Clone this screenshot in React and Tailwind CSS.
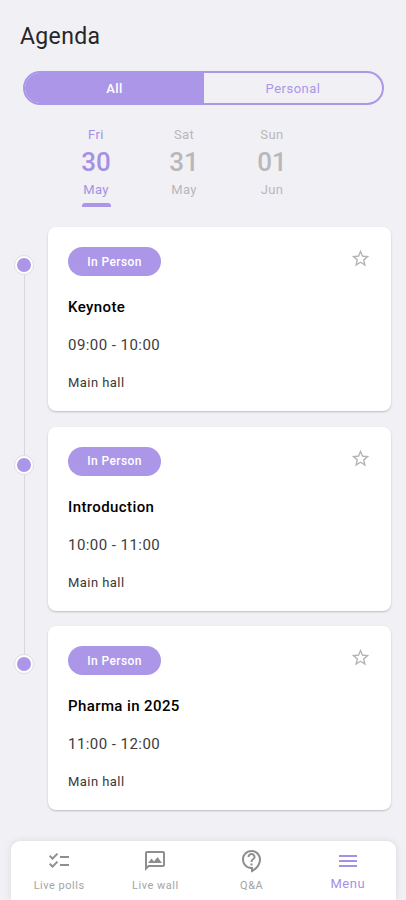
import {
  MdChecklist,
  MdMenu,
  MdOutlineContactSupport,
  MdOutlineMms,
  MdStarBorder,
} from "react-icons/md";

const days = [
  { day: "Fri", date: "30", month: "May", active: true },
  { day: "Sat", date: "31", month: "May" },
  { day: "Sun", date: "01", month: "Jun" },
];

const sessions = [
  { title: "Keynote", time: "09:00 - 10:00", place: "Main hall", type: "In Person" },
  { title: "Introduction", time: "10:00 - 11:00", place: "Main hall", type: "In Person" },
  { title: "Pharma in 2025", time: "11:00 - 12:00", place: "Main hall", type: "In Person" },
];

const navItems = [
  { label: "Live polls", icon: MdChecklist },
  { label: "Live wall", icon: MdOutlineMms },
  { label: "Q&A", icon: MdOutlineContactSupport },
  { label: "Menu", icon: MdMenu, active: true },
];

const Tabs = () => (
  <div className="ml-[23px] mr-[22px] mt-[17px] flex h-[34px] overflow-hidden rounded-full border-2 border-[#ab96e8] text-[13px] leading-[31px] tracking-[0.5px]">
    <button className="w-[179px] bg-[#ab96e8] text-center font-medium text-white">All</button>
    <button className="flex-1 text-center text-[#ab96e8]">Personal</button>
  </div>
);

const DayPicker = () => (
  <div className="ml-[52px] mt-[21px] flex">
    {days.map((d) => (
      <div
        key={d.date}
        className={`flex w-[88px] flex-col items-center ${d.active ? "text-[#a590e5]" : "text-[#b8b8ba]"}`}
      >
        <span className="text-[13px] leading-[18px] tracking-[0.4px]">{d.day}</span>
        <span className="text-[26px] font-medium leading-[37px]">{d.date}</span>
        <span className="text-[13px] leading-[18px] tracking-[0.4px]">{d.month}</span>
        {/* Underline of the selected day */}
        {d.active && <span className="mt-[4px] h-[4px] w-[29px] rounded-t-[3px] bg-[#ab96e8]" />}
      </div>
    ))}
  </div>
);

const SessionRow = ({ session, last }) => (
  <div className="flex h-[199.5px]">
    {/* Timeline */}
    <div className="flex w-12 flex-col items-center">
      <div className="mt-[28px] flex size-5 shrink-0 items-center justify-center rounded-full border border-[#dddce2] bg-white">
        <div className="size-[14px] rounded-full bg-[#ab96e8]" />
      </div>
      {!last && <div className="-mb-[28px] w-px flex-1 bg-[#d8d7dc]" />}
    </div>

    <div className="mr-[15px] h-[184px] flex-1 rounded-[8px] bg-white pl-5 pr-[20.5px] pt-[20px] shadow-[0_1px_2px_rgba(0,0,0,0.22)]">
      <div className="flex justify-between">
        <span className="flex h-[29px] w-[93px] items-center justify-center rounded-full bg-[#ab96e8] text-[12px] font-medium tracking-[0.4px] text-white">
          {session.type}
        </span>
        <MdStarBorder className="mt-px size-[21px] text-[#b4b4b4]" />
      </div>
      <h2 className="mt-[21px] text-[15px] font-medium leading-5 tracking-[0.4px] text-black">{session.title}</h2>
      <p className="mt-[18px] text-[15px] leading-5 tracking-[0.45px] text-[#3c3c3c]">{session.time}</p>
      <p className="mt-[18px] text-[13px] leading-5 tracking-[0.45px] text-[#383838]">{session.place}</p>
    </div>
  </div>
);

const BottomNav = () => (
  <nav className="ml-[11px] mr-[10px] flex h-[59px] rounded-t-[9px] bg-white shadow-[0_0_7px_rgba(0,0,0,0.1)]">
    {navItems.map(({ label, icon: Icon, active }) => (
      <div
        key={label}
        className={`flex flex-1 flex-col items-center pt-[8px] ${active ? "text-[#a590e5]" : "text-[#8e8e8e]"}`}
      >
        <Icon className="size-6" />
        <span
          className={
            active
              ? "mt-[2px] text-[13px] leading-[18px] tracking-[0.6px]"
              : "mt-[5px] text-[11px] leading-4 tracking-[0.5px] text-[#a4a4a4]"
          }
        >
          {label}
        </span>
      </div>
    ))}
  </nav>
);

const App = () => {
  return (
    <div className="flex h-[900px] w-[406px] flex-col overflow-hidden bg-[#f1f0f5] font-[Roboto,sans-serif]">
      <h1 className="ml-[20px] mt-[20px] text-[23px] leading-[34px] tracking-[0.35px] text-[#262628]">Agenda</h1>
      <Tabs />
      <DayPicker />
      <main className="mt-[20px] flex-1">
        {sessions.map((s, idx) => (
          <SessionRow key={s.title} session={s} last={idx === sessions.length - 1} />
        ))}
      </main>
      <BottomNav />
    </div>
  );
};

export default App;
